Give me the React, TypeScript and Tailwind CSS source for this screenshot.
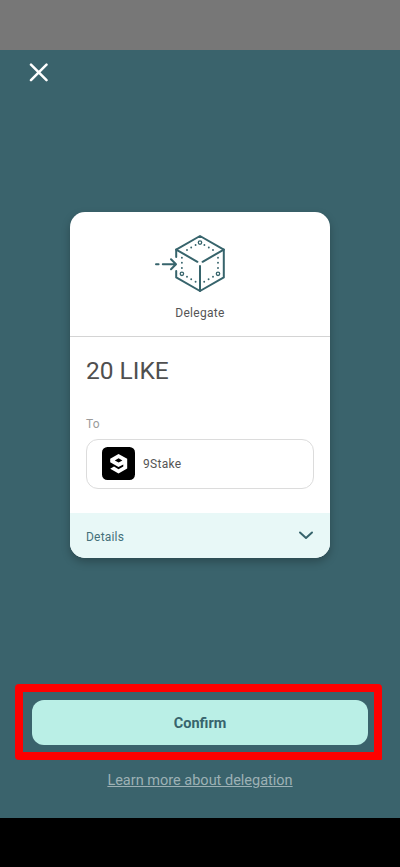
import React from "react";

function DelegateIcon() {
  return (
    <svg
      className="block h-[66px] w-[80px]"
      viewBox="150 230 80 66"
      fill="none"
      stroke="#37646c"
      strokeWidth="2"
      strokeLinecap="round"
      strokeLinejoin="round"
    >
      <path d="M176.2 257V249.6L200 236L223.8 249.6V277.4L200 291L176.2 277.4V271" />
      <path d="M176.2 249.6L197.4 261.8M223.8 249.6L202.6 261.8M200 266V291" />
      <path d="M156 264.2H158.6M162.8 264.2H175.8M171 259.2L176 264.2L171 269.2" />
      <g strokeWidth="1.3">
        <circle cx="200" cy="242.6" r="1.7" />
        <circle cx="181.9" cy="273.8" r="1.7" />
        <circle cx="218" cy="273.8" r="1.7" />
      </g>
      <g strokeWidth="1.9">
        <path d="M195.6 245H195.6M191.2 247.5H191.2M187 250H187M204.4 245H204.4M208.8 247.5H208.8M213 250H213" />
        <path d="M181.9 257.7H181.9M181.9 262.8H181.9M181.9 268H181.9M218 257.7H218M218 262.8H218M218 268H218" />
        <path d="M187 276.7H187M191.2 279.2H191.2M195.6 281.8H195.6M204.2 281.8H204.2M208.6 279.2H208.6M213 276.7H213" />
      </g>
    </svg>
  );
}

function ValidatorLogo() {
  return (
    <svg className="block size-[33px] shrink-0" viewBox="0 0 33 33">
      <rect width="33" height="33" rx="5.5" fill="#000" />
      <path
        d="M8.2 11.7L16.5 6.9L25.2 11.7V21.4L16.5 26.5L8.2 21.8L12 19.5L16.5 22.2L21.3 19.4V17.5L16.5 20L8.2 15.2ZM12.8 13.4L16.6 15.6L20.4 13.4L16.6 11.2Z"
        fill="#fff"
        fillRule="evenodd"
      />
    </svg>
  );
}

export default function App() {
  return (
    <div className="flex h-[867px] w-[400px] flex-col overflow-hidden bg-black font-[Roboto,sans-serif]">
      <div className="h-[50px] shrink-0 bg-[#777777]" />
      <main className="flex h-[768px] shrink-0 flex-col items-center bg-[#3a636c]">
        <header className="h-[161.5px] w-full pt-[13px] pl-[29px]">
          <button aria-label="Close" className="block">
            <svg className="block size-[20px]" viewBox="0 0 20 20" stroke="#fff" strokeWidth="2.5" strokeLinecap="round">
              <path d="M2 1.7L17.5 17.2M17.5 1.7L2 17.2" />
            </svg>
          </button>
        </header>
        <section className="flex h-[346px] w-[260px] shrink-0 flex-col overflow-hidden rounded-[15px] bg-white shadow-[0_4px_8px_rgba(0,0,0,0.25)]">
          <div className="flex h-[125.5px] shrink-0 flex-col items-center border-b border-[#d4d4d4] pt-[18.5px]">
            <div className="mr-[20px]">
              <DelegateIcon />
            </div>
            <p className="mt-[9px] text-[12px] leading-[16px] tracking-[0.3px] text-[#555555]">Delegate</p>
          </div>
          <div className="flex h-[176px] shrink-0 flex-col px-[16px] pt-[18px]">
            <h1 className="text-[24.5px] leading-[32px] text-[#4f4f4f]">20 LIKE</h1>
            <p className="mt-[29px] text-[12px] leading-[16px] tracking-[0.2px] text-[#9b9b9b]">To</p>
            <div className="mt-[6.5px] flex h-[50px] items-center gap-[8px] rounded-[12px] border border-[#dcdcdc] pl-[15px]">
              <ValidatorLogo />
              <span className="text-[12px] leading-[16px] tracking-[0.3px] text-[#555555]">9Stake</span>
            </div>
          </div>
          <div className="flex flex-1 items-center justify-between bg-[#e8f8f7] px-[16px]">
            <span className="pt-[3px] text-[12px] leading-[16px] tracking-[0.2px] text-[#44707a]">Details</span>
            <svg className="block h-[10px] w-[16px]" viewBox="0 0 16 10" fill="none" stroke="#37646c" strokeWidth="2" strokeLinecap="round" strokeLinejoin="round">
              <path d="M2 2.5L8 8L14 2.5" />
            </svg>
          </div>
        </section>
        <div className="mt-[126.5px] mr-[3px] flex h-[76px] w-[367px] shrink-0 items-center justify-center rounded-[4px] rounded-br-[1px] border-8 border-[#ff0000] pl-[3px]">
          <button className="h-[45px] w-[335.5px] shrink-0 rounded-[12px] bg-[#baefe6] pt-[3px] text-[14.5px] font-bold text-[#37646c]">
            Confirm
          </button>
        </div>
        <a className="mt-[11px] text-[14.5px] leading-[20px] text-[#9db1b5] underline">
          Learn more about delegation
        </a>
      </main>
      <div className="flex-1 bg-black" />
    </div>
  );
}
